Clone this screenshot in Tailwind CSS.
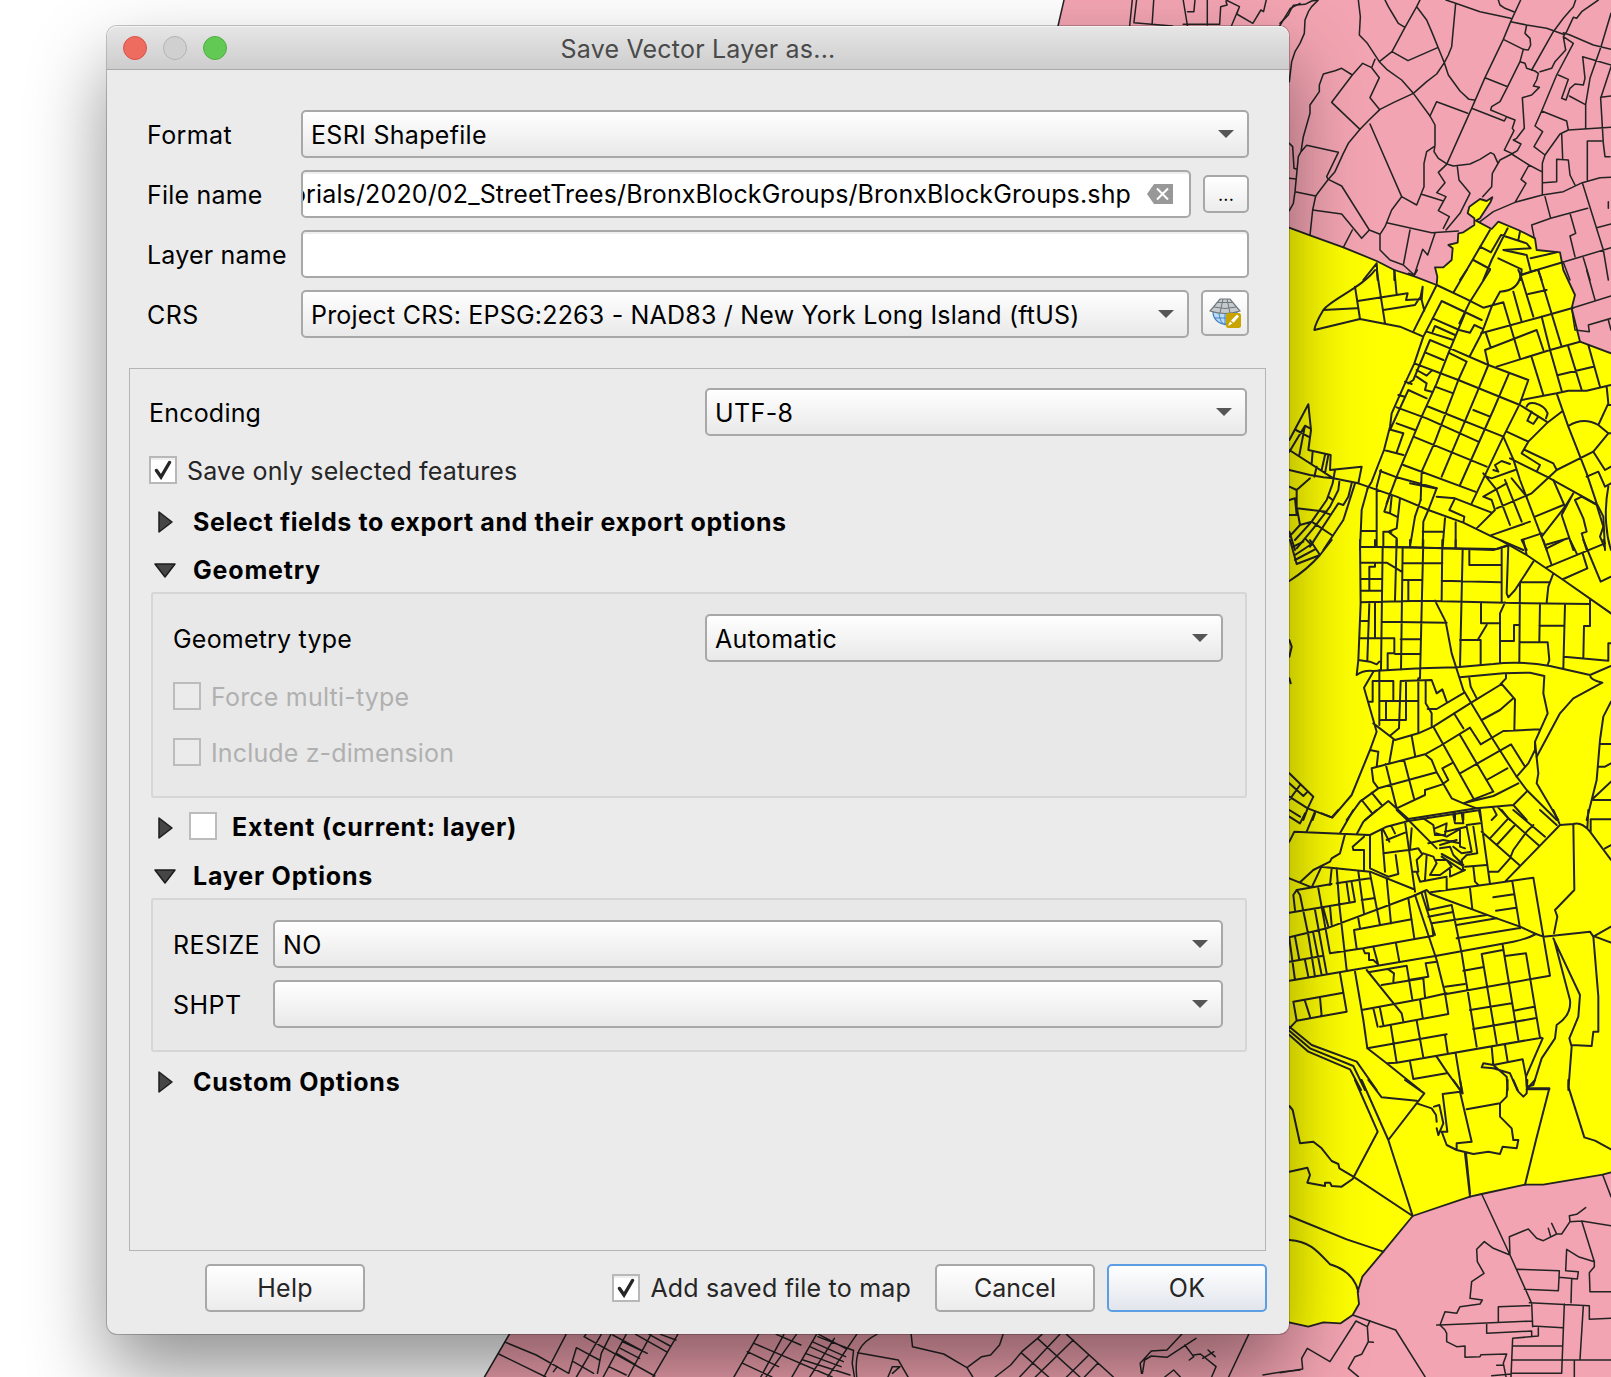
<!DOCTYPE html>
<html lang="en">
<head>
<meta charset="utf-8">
<title>Save Vector Layer as...</title>
<script src="https://cdn.jsdelivr.net/npm/@tailwindcss/browser@4"></script>
</head>
<body class="relative h-[1377px] w-[1611px] overflow-hidden bg-white font-['Inter',sans-serif] text-[25px] leading-7 tracking-[0.2px] text-black">

<!-- Map canvas -->
<svg class="absolute inset-0" width="1611" height="1377" viewBox="0 0 1611 1377" fill="none" stroke="#232323" stroke-linejoin="round" stroke-linecap="round">
  <path d="M1064 0L1058 26 509.5 1334 484.5 1377H1611V0Z" fill="#f3a4b2" stroke="none"/>
  <path d="M1064 0L1058 26M509.5 1334L484.5 1377" stroke-width="1.5"/>
  <g transform="translate(1280 0) scale(.333333)" stroke-width="6">
    <path fill="#ffff00" stroke-width="5.500" d="M0 673L27 683 90 706 190 742 290 783 343 810 405 830 470 855 472 830 465 802 490 802 515 780 518 745 505 735 533 728 535 700 550 697 583 675 583 655 563 640 568 620 600 597 620 603 637 592 632 605 600 655 588 662 635 687 655 665 715 690 765 715 770 750 840 757 850 810 885 885 875 925 900 1025 993 1060H1010V3512L993 3517 968 3524 790 3554 735 3554 605 3582 570 3590 398 3648 310 3755 247 3830 233 3875 237 3912 218 3945 182 3970 130 3967 85 3980 27 3967H0Z"/>
    <g stroke-width="4.600">
      <path d="M0 70L25 45 32 30 40 16 75 13 95 3 115 0M115 0L95 20 85 35 75 60 73 100 60 130 45 155 35 185 28 245M235 0L241 50 238 105 262 130 298 185 320 208 365 240 400 280 450 348 465 375 465 435 462 455 475 475 503 493 520 498 570 492 600 478 632 458 642 463 653 488M315 0L325 20 340 45 355 70 375 82M420 0L410 20 375 82 336 155 298 185M336 155L384 182 473 143M410 20L440 60 455 95 493 188 505 225 540 273 567 298 583 300M498 0L527 10 600 35 692 55M527 10L515 140 505 165 493 188 470 222 440 245 400 280 340 308 300 328 267 360 240 388 205 430 190 460 165 515 145 538 107 588 98 630 90 706M722 0L692 65 670 118 615 233 575 325 500 493M655 0L660 15 675 25 705 37M692 65L740 75 800 85 850 103M670 118L730 148M740 75L735 100 750 115 752 135 745 150 730 148 720 185 683 260 660 305 635 320 632 330 680 350M615 233L683 260M575 325L673 363 680 350 705 360 697 385 702 392 673 450 695 460M720 185L735 190 740 205 765 213 775 220 770 240 760 258 778 262 755 285 727 293 733 385 710 415 700 420 723 432 712 452 695 462"/>
      <path d="M887 0L880 20 850 55 820 95 755 210M955 0L905 35 890 55 880 52 860 95 850 110M850 98L870 105 940 135 993 148M850 110L880 130 830 225 785 333 765 378 788 395 762 440 795 465 787 490 787 585M850 110L857 150 825 185 815 205 780 215M835 225L865 238 845 295 858 300 870 265 885 252 910 255 915 235 908 170 993 195M868 288L915 313M993 40L963 140 930 235 917 313 917 385M785 333L860 363 865 390M795 465L840 402 865 390 993 382M993 200L962 295 970 430 975 470 990 470M962 292L993 288M845 400L848 475M830 545V478L865 480 870 525 885 555M830 545L790 548M965 423H922V540M787 585L850 575 907 548 960 533 993 532M695 462L747 495 785 515M695 462L660 480 637 520 635 560 608 590M747 495L723 538 738 550 705 607M600 665L640 635 705 607 787 585M795 590L812 655M762 710L755 675 812 655 923 625M907 548L970 750 985 840M870 640L887 700 870 708 885 770M950 683L993 672M848 787L993 743M910 773L930 840M985 605V625M850 787L870 840"/>
      <path d="M270 372L365 590 410 615 432 560 432 490 440 455 462 440M285 178L275 203 248 190 217 225 185 205 165 212 130 222 118 255 118 275 90 315 90 340 70 410 63 455 55 470 45 575 40 610 28 632M298 328L270 293 298 233 275 203M217 225L155 307 240 388M63 455L80 436 175 457 140 530 145 538M28 430L38 440 42 505 48 507M28 535L47 537M45 575L107 588M145 538L185 558 268 690M98 630L185 642 245 715 268 690 300 703M217 690L190 742M365 590L335 630 315 680 300 703 300 750 330 780 370 795 403 825M320 668L455 698 535 693M390 690L370 795M465 700L443 765 428 748 403 825M500 493L475 517 495 548 470 578 498 590 475 632 508 650 490 685M425 583L490 603M532 500L537 540 570 580 540 640 498 690M450 348L470 305 563 340"/>
      <path transform="translate(0 810)" d="M875 115L885 180 928 185 925 165 993 145M875 115L993 78M920 0L945 90M985 150L993 180M385 10L403 15M403 15L412 0"/>
      <path transform="translate(0 3240)" d="M605 342L690 525 755 670 758 740M968 284L993 350M690 525L640 505 613 485 590 508 592 545 612 580 575 605 570 655 607 660 600 672 540 680 530 700 495 695 480 735 758 723M470 735H490M480 735L495 750 500 760 500 785 530 800 555 798V832L600 830 603 824 680 822 670 850 678 890M650 856H670M690 525L688 470 745 447 770 475 790 482 830 462 845 462 870 425 905 423 993 437M870 425L868 407 890 403 917 383M805 445L812 470M815 430L830 462M905 423L943 545 943 560 928 578 930 635 993 635M943 545L895 530 860 508 857 572 895 575 892 597 838 592M712 568L838 572 835 632 733 628M875 598L873 668M748 668L928 677V718L993 715M655 680L750 677M655 680V725M620 730V760L755 753V770M758 738L848 743M775 743V768L698 775 693 890M698 798H848M695 840H993M853 672L845 880M910 677L900 838M693 880H845M883 842V890M635 887L693 882M218 705L347 750 435 890M0 878L68 867 65 835 82 805 150 845 228 723 262 740 270 722M262 740L265 785 280 787M265 785L245 823 225 830 205 865 235 890"/>
    </g>
    <path d="M290 790L250 840M290 790L293 840M343 810V840M630 690L560 810 540 840M683 685L670 710 635 780 610 840M600 740L633 757 663 705 740 730 752 745 670 750M720 695L715 720M670 750L740 765M655 775L725 808 722 840M580 780L630 807M740 765L752 812M752 775L830 757M720 825L848 787M775 812L785 840"/>
    <g transform="translate(0 810)">
      <path d="M285 0C250 50 150 90 130 120 115 145 105 165 103 180L240 147 360 170 430 200M290 0L315 160M343 0L350 75M225 50L240 147M130 120L230 115M233 93L383 70 378 90 420 88 428 50 425 90 433 122M310 120L405 105 418 85M470 45L400 185M470 45L555 85 610 113 670 97 720 265M560 0L520 68M630 0L570 95 538 160M485 93L605 150M485 93L430 200 403 280 375 340 335 430 330 470 312 540 275 635 263 655M458 145L538 180 570 188 583 165 605 175M555 130L505 250 470 340 425 440 350 620 320 700M660 65L635 110 605 190 570 257M660 65Q715 62 722 15L715 0M603 190L785 140 880 113M458 185L465 168 525 195M440 185L520 210M450 210L510 235 625 285 745 330 720 400 670 500 575 700M450 210L400 330 385 340M435 247L490 270M510 250L560 275 535 330 465 515 425 605 422 690M403 280L535 330 720 405 800 455M625 285L590 370 485 620M687 310L640 420 540 645M465 350L520 370M580 420L630 440M350 412L440 445 595 515M440 408L670 500M400 500L620 590M370 585L585 665M300 603L345 620 470 655M410 300L440 317 455 302M410 320L440 340 435 360 455 365M385 360L440 385M385 360L330 480M375 335L395 342M355 375L375 380M350 460L405 480M335 480L370 490 350 547M312 540L370 555"/>
      <path d="M845 425L800 460 745 515 725 550 780 585 770 605 690 565M745 515L680 485M735 540L820 580 830 600M740 410Q745 395 765 400 795 408 803 430L798 445M755 425L742 452 760 462 775 440M725 390L830 370 865 362 920 362 993 345M755 262L790 375M650 290L810 240 900 215M615 240L770 180 790 240M615 240L625 285M618 190L632 232M785 140L810 240 845 362M725 15L770 0M720 10L760 140M700 65L725 155M745 72L800 60M775 0L845 230M865 230L905 360M835 315L940 290M925 225L960 350M830 370L865 470 920 610 950 700 970 740 975 840M980 350L985 400 955 465M865 468Q910 440 955 465L985 490 993 490M985 405H993M985 490L940 545 830 600 755 670 650 715M670 500L700 568M690 565L800 620 945 700M700 568L720 630 800 840M610 610L650 660 690 765M620 620L635 625 705 600M640 600L655 605 645 585 665 573 690 582M675 630L725 755M695 625L740 680M610 680L680 640M610 680L635 690 645 720 590 775M630 797L750 755M470 680L525 685 635 728M525 685L508 720 553 740 550 758M303 600L290 650M160 625L235 640 350 680 445 720 550 758 630 797 730 840M263 655L245 720 240 840M290 655V830M330 670L313 725 330 730 350 740M330 730L335 680M360 685L350 775 325 785 350 805V830M310 830V785H335M422 690L405 740 390 830M445 720L430 755 428 830M445 720L470 655M428 785H488M495 745L488 830M527 757V830M240 830L340 832 650 837 685 825M245 783H290M390 640L465 655"/>
      <path d="M85 403L28 510M85 403L93 480 85 540 152 555 150 600 245 590 235 640M75 467L58 555M48 480L85 500M28 545L75 467 90 475M28 540L160 625M98 545L95 580M135 555L125 600M110 590L103 620M145 555L135 610M28 600L90 615 130 622 160 625M90 625L50 660M28 650L50 660V710L60 765M50 715L140 725M28 690L45 685 50 735H28M165 600L158 640 140 690 95 755 45 810M178 635L175 660 150 710 100 775 50 835M215 640L205 680 190 705 175 700 90 830M225 640L190 750 130 840M28 800L60 765 95 755 155 795M28 785L45 840M75 805L95 825M145 680L158 690M125 725L150 733"/>
      <path d="M940 545L975 600 993 590M920 620L955 605 975 650 993 640M820 630L855 710 785 800M765 740L850 705M880 670L845 735 880 840M905 680L885 690 910 745 920 785 905 790 920 840M905 680L950 705 970 770 960 800 973 830M985 650C970 730 980 800 993 840M795 825L865 805M725 810L785 790M725 810L740 840M880 670L855 710"/>
    </g>
    <g transform="translate(0 1620)">
      <path d="M240 0L242 190 235 360 230 405M242 20L400 22 640 30 690 15M285 0V20M308 20L303 390M350 0L345 180M368 25L363 390M430 0L420 415M487 0L485 180M548 30L540 380M568 30V75H662M665 25V185M685 15L680 160 685 172 705 150 760 65M242 68H320L365 95M268 150V80H285V68M242 117H305M242 152H305M368 70H487M368 120H425M385 120V180M390 0V22M527 0V25M242 187L425 182 740 190 930 192V258H912L910 355M930 180V192M485 122L662 127M722 127H810M720 127L718 365M820 100L805 140 800 187M465 182L497 245 515 340 550 450 640 600 710 710 740 750 830 840M245 243H265M268 190L262 360M285 190V295M240 295H343V340H323V388M305 245L500 248M362 298H420M345 342H420M235 360L270 365 290 373 298 365M603 187V250H660M620 255L593 300M540 300H602V375M675 187L660 220V365M718 255H702V303H660M780 190L778 303M778 257H852M855 192L850 385M722 307H803L808 360 803 375M852 350L985 362V310H993M230 405Q250 390 280 393L420 385 530 382 640 372Q720 362 810 378L930 405 993 378M930 405Q930 420 967 428L880 475 840 520 770 650M660 0L740 45 850 120 993 220M730 0L740 45M790 0L815 75M800 25L850 0M800 82L975 10 970 0M870 0L890 40M910 0L962 125 993 110M908 40L922 85 850 117"/>
      <path d="M280 395L252 443 290 575 270 630 215 765 157 833 83 805M298 390V555M268 485H278V423H340V483M303 483H412M362 423L357 565 330 587M362 423L455 420 470 460 487 448 500 485M378 423V540H303M318 485V540M415 415V578M437 422V490L455 520V560M280 550L345 600 415 580 460 560 570 490 665 432 705 478 703 570M443 507H470L553 458M540 412L670 400 750 398 793 408 790 460 803 520 765 605 765 630 745 670 710 710M765 605L775 700 770 730 835 840M568 415L572 440 590 475M678 400V415L662 432M605 540L660 510 700 475M340 600L328 668M395 588L405 645M275 685L435 643 480 618 570 563 602 613 670 573 780 568M275 685L280 725 295 745M270 630L295 635 290 680M317 672L350 805M372 660L402 775M295 745L470 697M435 643L455 660 470 697 515 775 550 790 590 805 700 795 740 755M460 560L580 775M522 520L550 565M540 585L640 755 550 790M540 700L693 613 735 680M515 670L487 685 505 720 487 733 435 750V765L350 805M620 720L682 685M550 790L640 768 715 730M295 745L240 785 200 840M245 780L275 818M275 758L305 795M255 840L325 783 385 837 590 805M700 795L740 840M525 820V840M550 818V840M597 812L603 840M640 805L650 825 635 840M655 803L690 840"/>
      <path d="M993 485L970 530 960 600 950 720 920 840M960 612H993M953 680H975L993 670M940 775L993 725M940 780H993M30 0L50 72 120 45 155 0M120 45Q80 90 28 123M40 20L70 5M45 45L95 12M45 60L105 28M90 0L120 45M28 300L35 320 28 350M28 415L32 430M28 700L100 770 83 805 70 840M28 730L70 768 83 755M60 735L28 780M28 770L83 805M28 810L60 830M105 820L98 840"/>
    </g>
    <g transform="translate(0 2430)">
      <path d="M350 0L385 33 600 0M385 33L320 50 270 75 43 65 28 95M80 65L105 5M28 20L60 40 75 10M125 10L155 22 175 0M220 0L180 70M290 0L250 35 230 73M195 73L180 130 155 145 150 155 100 180 60 217M28 205L95 232 122 175M122 170L270 185 400 237M252 80L218 110 220 120H252V180M270 75V175L325 200 355 192 347 135M305 60L315 185M310 60L328 95M335 50L345 70M375 35L405 245M320 90L375 68M310 130L385 120M50 240L155 222M28 308L225 275M155 175L150 225M170 175L178 285 200 480M170 220L270 205M235 185L252 310M270 190L300 345M320 205L333 340M200 220L208 275M215 218L225 275M45 300L40 255 50 240 60 255 85 375M115 235L150 430M245 270L280 265M28 382L140 355 400 258 440 240 452 252 650 325 720 350 768 372M105 300L140 490M130 295L145 350M150 290L155 345M28 455L130 437M45 380L58 450M28 385L45 510M85 375L105 500M100 370L125 495M28 512L200 483 470 437M150 430L250 415 460 377M75 450L85 500"/>
      <path d="M230 415L222 360 395 328M235 325L240 355M385 265L403 385M405 255L445 375 470 450 495 550M425 250L465 375M250 418L255 430 267 430V450L280 450 293 462M280 410L295 465M348 400L358 455M445 300L515 285M445 320L515 307M460 375L455 340 620 315M515 285L545 430 590 710M435 245L447 300M530 345L650 325M530 385L715 355M470 437L700 395Q740 387 768 372M452 247L630 222 760 203 790 380M570 235L577 297M500 205V240M697 215L720 355M640 262L702 253M648 302L708 293M600 0L608 65 630 222M605 65L718 165M630 85L685 25M650 105L705 45M665 0L685 25 775 105M700 0L795 80M690 145L700 120 740 65 760 45M675 215L840 45 880 42 883 240 825 300 832 320 822 370M780 0L830 45M820 0L838 40M925 0L922 55M880 42Q905 35 930 65L993 150M932 65V28H993M975 115L993 105M625 185H655L690 145M768 372L790 380 930 365 940 380 993 350M945 380L993 398M940 380L955 560V665H940L935 708 875 705M790 380L810 497 495 553M820 385L900 555 895 620 868 685 875 710 865 840M822 388L870 570Q875 615 830 645L825 685 785 745 760 825 740 830 738 800 788 685M740 838H808"/>
      <path d="M225 485L250 630 262 715 500 673M320 760L350 758 785 683M245 600L420 568 500 550M180 490L200 605 50 632 28 655M50 632L40 575 190 548M120 562L125 618M75 573L90 620M260 480L365 610 370 635M265 487L380 467 397 568M305 525L430 505M325 478L342 490 340 515M385 510L445 500 437 460 470 455M430 505L435 560M420 570L428 622M300 650L505 612 495 550M280 595L293 650M300 595L310 645M332 645L350 758M410 632L430 742M495 675L503 728M262 715L320 760 420 840M495 530L555 522M550 482L608 472M668 420L605 432 650 700M668 405L715 690M675 438L738 430 780 683M570 600L695 580M580 657L765 625M702 602L762 590M390 755L400 807 500 790M470 740L500 785 540 840M527 730L545 840M635 710L640 765 728 748 738 800M675 705L683 755M605 772L610 760 640 765 680 800 683 840M605 772L640 775 690 790 712 840M28 650L95 705 230 755 290 840M28 662L90 715 220 768 255 840M28 675L85 725 210 778 243 840M430 25L460 45 465 75 495 75 500 40 465 55M385 30L455 100 470 115M395 55L390 120 415 115 425 130M495 65L560 50M545 10L550 40 525 40 520 15M560 50L575 125 545 130 520 110M580 50L592 130 560 135M445 100L490 90 540 100M480 115L510 110 520 135 550 165M485 140L545 180M545 165L485 132M400 185H410L420 215 500 200M415 185L410 150 430 130 460 140 470 160 450 195M440 135L435 210M470 150L500 150 515 170 480 195 455 195M555 170L620 165M580 170L585 215 595 225M540 60V110L555 115M550 180L545 150 560 135M560 45L600 40M510 180V200L555 180M470 70L500 80 535 60M480 105L530 90"/>
    </g>
    <g transform="translate(0 3240)">
      <path d="M225 0L293 155 218 297 185 320 155 318 150 308 135 308V318L82 308 90 285 82 263 28 275M245 0L325 180 398 408M265 0L305 52 410 62M375 0L433 40 325 180M410 70L455 85 468 105 470 125M462 80L478 75 490 130 475 165 470 145M530 210V190L575 185 540 35 488 42 502 155H485L500 195 530 210 580 222 625 215 660 222 668 200 710 205 715 180 700 180 695 145 660 110V72M560 88L660 70 680 50 683 0M520 0L548 40 540 0M555 220L570 350M558 220L570 340M700 0L715 35 730 50 740 40 742 0M765 0L742 25H808L768 180 735 314M865 0V20L913 172 945 182 993 208M28 78L38 90 60 190 100 185 125 205 155 243 175 252 178 265 220 290 398 408M28 408L200 478 310 515M28 480C90 485 110 510 150 553 190 565 225 590 235 635"/>
    </g>
  </g>
  <g transform="translate(460 0) scale(.5357 .33333)">
    <path stroke-width="1.5" vector-effect="non-scaling-stroke" d="M1255 0L1250 78M1263 0L1258 68 1330 78M1295 0L1292 72M1350 0L1358 78M1358 35H1370L1372 0M1350 73H1418L1420 20 1432 15 1430 5M1395 0V75M1430 0L1455 20 1440 78M1455 20L1450 42 1480 70 1495 30 1500 35 1505 0M1568 10L1550 25 1530 78"/>
  </g>
  <g transform="translate(100 1220) scale(.38265 .33333)">
    <path stroke-width="1.5" vector-effect="non-scaling-stroke" d="M1218 343L1160 471M1060 367L1140 405 1225 460M1042 402L1165 471M1185 455L1195 440M1310 343L1245 471M1335 343L1310 400 1300 460M1270 343L1265 350 1450 468M1245 383L1225 460M1245 383L1305 420M1237 425L1290 460M1375 343L1315 471M1440 343L1380 471M1510 343L1445 471M1340 345L1430 400M1365 365L1420 395M1360 385L1410 415M1350 400L1400 435M1330 440L1375 465M1400 343L1480 395M1435 343L1490 378M1465 343L1505 360"/>
  </g>
  <g transform="translate(600 1220) scale(.44643 .33333)">
    <path stroke-width="1.5" vector-effect="non-scaling-stroke" d="M355 343L300 471M412 343L360 471M440 343L372 471M485 343L430 471M575 343L510 471M345 370L520 471M330 395L400 440M320 430L385 471M395 343L450 375M488 350L565 390M490 343L550 385M475 365L550 410M470 380L545 425M460 400L540 440M455 420L560 465M525 355L470 471M620 343C580 370 570 400 575 471M568 390L565 430 570 471M577 398L668 420 690 471M645 471L655 440 672 440 655 460M697 343L700 380 770 402 822 443 855 410 875 405 895 375 903 343M822 443L835 471M885 471L920 435 945 395 980 355 990 343M980 355L1075 471M945 400L1005 471M1045 343L1150 471M1030 343L940 471M1060 360L975 471M1095 405L1045 471M1115 430L1085 471M1303 343L1270 390 1235 393 1210 430 1213 460M1335 355L1270 412 1235 408 1220 420 1215 460M1310 375L1330 410 1320 420M1330 405L1345 402 1380 440 1370 471M1350 415L1375 395M1362 390L1378 410M1265 471L1285 450 1300 471M1453 343L1408 471M1485 465L1530 455 1568 450"/>
  </g>
</svg>

<!-- Dialog -->
<main class="absolute top-[26px] left-[107px] h-[1308px] w-[1182px] rounded-[10px] bg-[#ebebeb] shadow-[0_0_0_1px_rgba(0,0,0,0.22),0_38px_78px_rgba(0,0,0,0.43)]">
  <header class="relative flex h-11 items-center justify-center rounded-t-[10px] border-b border-[#a9a9a9] bg-linear-to-b from-[#e6e6e6] to-[#cdcdcd] pt-[3px] text-[#4a4a4a] shadow-[inset_0_1px_0_#f4f4f4]">
    <div class="absolute top-2.5 left-4 flex gap-4">
      <i class="size-6 rounded-full border border-[#d9544a] bg-[#ee6b60]"></i>
      <i class="size-6 rounded-full border border-[#b4b4b4] bg-[#d0d0d0]"></i>
      <i class="size-6 rounded-full border border-[#53ae43] bg-[#62c955]"></i>
    </div>
    <h1>Save Vector Layer as...</h1>
  </header>

  <form class="flex flex-col">
    <section class="flex flex-col gap-3 pt-10 pr-10 pl-10">
      <div class="flex h-12 items-center">
        <label class="w-[154px] whitespace-nowrap pt-0.5 tracking-[0.4px]">Format</label>
        <div class="flex h-12 flex-1 items-center justify-between rounded-[5px] border-2 border-[#a8a8a8] bg-linear-to-b from-white to-[#e9e9e9] pr-[13px] pl-2">
          <span class="pt-0.5 tracking-[0.3px]">ESRI Shapefile</span>
          <svg width="16" height="8" viewBox="0 0 16 8"><path d="M0 0H16L8 8Z" fill="#555"/></svg>
        </div>
      </div>
      <div class="flex h-12 items-center">
        <label class="w-[154px] whitespace-nowrap pt-0.5">File name</label>
        <div class="flex h-12 w-[890px] items-center rounded-[5px] border-2 border-[#a8a8a8] bg-white pr-4 shadow-[inset_0_2px_0_#efefef]">
          <div class="flex w-[828px] justify-end overflow-hidden whitespace-nowrap tracking-[0.14px]">orials/2020/02_StreetTrees/BronxBlockGroups/BronxBlockGroups.shp</div>
          <svg class="ml-4 shrink-0" width="26" height="20" viewBox="0 0 26 20"><path d="M0 10L7 0H26V20H7Z" fill="#989898"/><path d="M10 4.500L21 15.500M21 4.500L10 15.500" stroke="#fff" stroke-width="2"/></svg>
        </div>
        <button type="button" class="ml-3 flex h-[38px] w-[46px] items-center justify-center rounded-[5px] border-2 border-[#a8a8a8] bg-linear-to-b from-white to-[#ececec] pt-0.5 text-[18px]">...</button>
      </div>
      <div class="flex h-12 items-center">
        <label class="w-[154px] whitespace-nowrap pt-0.5">Layer name</label>
        <div class="h-12 flex-1 rounded-[5px] border-2 border-[#a8a8a8] bg-white shadow-[inset_0_2px_0_#efefef]"></div>
      </div>
      <div class="flex h-12">
        <label class="flex w-[154px] items-center pt-0.5 tracking-[0.5px]">CRS</label>
        <div class="flex h-12 w-[888px] items-center justify-between rounded-[5px] border-2 border-[#a8a8a8] bg-linear-to-b from-white to-[#e9e9e9] pr-[13px] pl-2">
          <span class="pt-0.5">Project CRS: EPSG:2263 - NAD83 / New York Long Island (ftUS)</span>
          <svg width="16" height="8" viewBox="0 0 16 8"><path d="M0 0H16L8 8Z" fill="#555"/></svg>
        </div>
        <button type="button" class="ml-3 flex h-[46px] w-12 items-center justify-center rounded-[5px] border-2 border-[#a8a8a8] bg-linear-to-b from-white to-[#ececec]">
          <svg width="32" height="30" viewBox="0 0 32 30" fill="none">
            <path d="M4 14A12 12 0 0 0 28 14Z" fill="#b9dcfa" stroke="#4682bd" stroke-width="1.200"/>
            <path d="M5 20H25M16 13V27M10 13C10 20 12 25 16 27M22 13C22 20 20 25 16 27" stroke="#4682bd"/>
            <path d="M11 1H21L31 13Q16 18 1 13Z" fill="#c4cace" stroke="#70767a" stroke-width="1.200"/>
            <path d="M8.500 4.500H23.500M5 9Q16 12 27 9M14 1L11 15M18 1L21 15" stroke="#70767a"/>
            <rect x="17" y="15" width="15" height="15" rx="2.500" fill="#c9a300"/>
            <path d="M19 28L21 23.500 23.500 25.500ZM22 22.500L28 16.500 30 18.500 24.500 24.700Z" fill="#fff"/>
          </svg>
        </button>
      </div>
    </section>

    <section class="mx-[22px] mt-[30px] h-[883px] w-[1137px] border border-[#b4b4b4] pt-[19px] pr-[18px] pl-[19px]">
      <div class="flex h-12 items-center justify-between">
        <label class="pt-0.5">Encoding</label>
        <div class="flex h-12 w-[542px] items-center justify-between rounded-[5px] border-2 border-[#a8a8a8] bg-linear-to-b from-white to-[#e9e9e9] pr-[13px] pl-2">
          <span class="pt-0.5 tracking-[0.4px]">UTF-8</span>
          <svg width="16" height="8" viewBox="0 0 16 8"><path d="M0 0H16L8 8Z" fill="#555"/></svg>
        </div>
      </div>
      <label class="mt-5 flex h-7 items-center gap-2.5 text-[#262626]">
        <i class="flex size-7 items-center justify-center border-2 border-[#b8b8b8] bg-white shadow-[inset_0_2px_0_#efefef]"><svg width="18" height="20" viewBox="0 0 18 20"><path d="M2.500 10.500L7 17 15.500 2.500" fill="none" stroke="#262626" stroke-width="3.400" stroke-linecap="round"/></svg></i>
        <span class="pt-px tracking-[0.14px]">Save only selected features</span>
      </label>
      <div class="mt-6 flex h-7 items-center font-bold tracking-[0.6px]">
        <svg class="mr-5 ml-[9px]" width="15" height="22" viewBox="0 0 15 22"><path d="M1 1V21L14 11Z" fill="#464646" stroke="#1c1c1c" stroke-width="1.500" stroke-linejoin="round"/></svg>
        Select fields to export and their export options
      </div>
      <div class="mt-5 flex h-7 items-center font-bold tracking-[0.8px]">
        <svg class="mr-[17px] ml-[5px]" width="22" height="15" viewBox="0 0 22 15"><path d="M1 1H21L11 14Z" fill="#464646" stroke="#1c1c1c" stroke-width="1.500" stroke-linejoin="round"/></svg>
        Geometry
      </div>
      <fieldset class="mt-2 ml-0.5 h-[206px] rounded-[3px] border-2 border-[#d6d6d6] bg-[#e8e8e8] pt-5 pr-[22px] pl-5">
        <div class="flex h-12 items-center justify-between">
          <label class="pt-0.5">Geometry type</label>
          <div class="flex h-12 w-[518px] items-center justify-between rounded-[5px] border-2 border-[#a8a8a8] bg-linear-to-b from-white to-[#e9e9e9] pr-[13px] pl-2">
            <span class="pt-0.5 tracking-[0.3px]">Automatic</span>
            <svg width="16" height="8" viewBox="0 0 16 8"><path d="M0 0H16L8 8Z" fill="#555"/></svg>
          </div>
        </div>
        <label class="mt-5 flex h-7 items-center gap-2.5 text-[#b0b0b0]"><i class="size-7 border-2 border-[#bcbcbc] bg-[#ebebeb]"></i><span class="pt-px">Force multi-type</span></label>
        <label class="mt-7 flex h-7 items-center gap-2.5 text-[#b0b0b0]"><i class="size-7 border-2 border-[#bcbcbc] bg-[#ebebeb]"></i><span class="pt-px tracking-[0.14px]">Include z-dimension</span></label>
      </fieldset>
      <div class="mt-3.5 flex h-7 items-center font-bold tracking-[0.75px]">
        <svg class="mt-1 mr-4 ml-[9px]" width="15" height="22" viewBox="0 0 15 22"><path d="M1 1V21L14 11Z" fill="#464646" stroke="#1c1c1c" stroke-width="1.500" stroke-linejoin="round"/></svg>
        <i class="mr-[15px] size-7 border-2 border-[#bcbcbc] bg-white"></i>
        <span class="pt-0.5">Extent (current: layer)</span>
      </div>
      <div class="mt-[22px] flex h-7 items-center font-bold tracking-[0.8px]">
        <svg class="mr-[17px] ml-[5px]" width="22" height="15" viewBox="0 0 22 15"><path d="M1 1H21L11 14Z" fill="#464646" stroke="#1c1c1c" stroke-width="1.500" stroke-linejoin="round"/></svg>
        Layer Options
      </div>
      <fieldset class="mt-2 ml-0.5 flex h-[154px] flex-col gap-3 rounded-[3px] border-2 border-[#d6d6d6] bg-[#e8e8e8] pt-5 pr-[22px] pl-5">
        <div class="flex h-12 items-center">
          <label class="w-[100px] pt-0.5 tracking-[0.4px]">RESIZE</label>
          <div class="flex h-12 flex-1 items-center justify-between rounded-[5px] border-2 border-[#a8a8a8] bg-linear-to-b from-white to-[#e9e9e9] pr-[13px] pl-2">
            <span class="pt-0.5 tracking-[0.4px]">NO</span>
            <svg width="16" height="8" viewBox="0 0 16 8"><path d="M0 0H16L8 8Z" fill="#555"/></svg>
          </div>
        </div>
        <div class="flex h-12 items-center">
          <label class="w-[100px] pt-0.5 tracking-[0.5px]">SHPT</label>
          <div class="flex h-12 flex-1 items-center justify-end rounded-[5px] border-2 border-[#a8a8a8] bg-linear-to-b from-white to-[#e9e9e9] pr-[13px] pl-2">
            <svg width="16" height="8" viewBox="0 0 16 8"><path d="M0 0H16L8 8Z" fill="#555"/></svg>
          </div>
        </div>
      </fieldset>
      <div class="mt-4 flex h-7 items-center font-bold tracking-[0.75px]">
        <svg class="mr-5 ml-[9px]" width="15" height="22" viewBox="0 0 15 22"><path d="M1 1V21L14 11Z" fill="#464646" stroke="#1c1c1c" stroke-width="1.500" stroke-linejoin="round"/></svg>
        Custom Options
      </div>
    </section>

    <footer class="mt-[13px] flex h-12 items-center pr-[22px] pl-[98px] text-[#262626]">
      <button type="button" class="h-12 w-40 rounded-[5px] border-2 border-[#a8a8a8] bg-linear-to-b from-white to-[#ececec]">Help</button>
      <label class="ml-auto flex items-center gap-2.5">
        <i class="flex size-7 items-center justify-center border-2 border-[#b8b8b8] bg-white shadow-[inset_0_2px_0_#efefef]"><svg width="18" height="20" viewBox="0 0 18 20"><path d="M2.500 10.500L7 17 15.500 2.500" fill="none" stroke="#262626" stroke-width="3.400" stroke-linecap="round"/></svg></i>
        <span>Add saved file to map</span>
      </label>
      <button type="button" class="ml-6 h-12 w-40 rounded-[5px] border-2 border-[#a8a8a8] bg-linear-to-b from-white to-[#ececec] tracking-normal">Cancel</button>
      <button type="button" class="ml-3 h-12 w-40 rounded-[5px] border-2 border-[#5b9ee4] bg-linear-to-b from-white to-[#e1e5ec]">OK</button>
    </footer>
  </form>
</main>
</body>
</html>
